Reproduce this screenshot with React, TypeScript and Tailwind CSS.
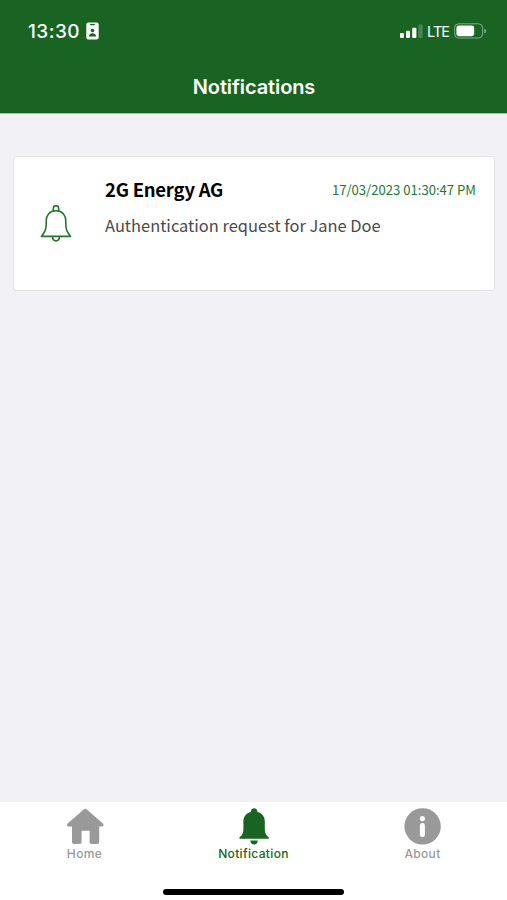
import React from "react";

interface Notification {
  sender: string;
  message: string;
  receivedAt: string;
}

const notifications: Notification[] = [
  {
    sender: "2G Energy AG",
    message: "Authentication request for Jane Doe",
    receivedAt: "17/03/2023 01:30:47 PM",
  },
];

const HomeIcon = () => (
  <svg className="h-[38px] w-[38px]" viewBox="0 0 38 38" fill="currentColor">
    <path d="M20.6 1.3 37.2 15.8Q38.2 18.2 36.4 18.4H33.2V33.9Q33.2 35.9 31.2 35.9H25.4Q23.6 35.9 23.6 34V22.8H15.6V34Q15.6 35.9 13.8 35.9H8Q6 35.9 6 33.9V18.4H2.2Q.4 18.2 1.4 15.8L18 1.3Q19.3.2 20.6 1.3Z" />
  </svg>
);

const BellIcon = () => (
  <svg className="h-[38px] w-[38px]" viewBox="0 0 38 38" fill="currentColor">
    <path d="M16 3C16.2-.6 22-.6 22.2 3L22.4 4C27.2 5.2 29.8 9 29.8 13.5V21.2C29.8 25.2 31 27.3 34 29.6Q34 30.8 33 30.8H5.2Q4.2 30.8 4.2 29.6C7.2 27.3 8.4 25.2 8.4 21.2V13.5C8.4 9 11 5.2 15.8 4Z" />
    <path d="M15.3 32.5H22.9Q22.4 36.6 19.1 36.6T15.3 32.5Z" />
  </svg>
);

const InfoIcon = () => (
  <svg className="h-[38px] w-[38px]" viewBox="0 0 38 38">
    <circle cx="18.6" cy="18.4" r="18.2" fill="currentColor" />
    <circle cx="18.4" cy="10.6" r="2.6" fill="white" />
    <rect x="15.9" y="15" width="5" height="14" rx="2.3" fill="white" />
  </svg>
);

const tabs = [
  { label: "Home", icon: HomeIcon, active: false },
  { label: "Notification", icon: BellIcon, active: true },
  { label: "About", icon: InfoIcon, active: false },
];

const StatusBar = () => (
  <div className="flex h-[62px] items-center justify-between pl-7 pr-5 text-white">
    <div className="flex items-center">
      <span className="w-[58px] pt-px text-[19px] font-medium leading-6 tracking-[0.45px]">13:30</span>
      <svg className="h-[18px] w-[13px]" viewBox="0 0 13 18">
        <rect x=".3" y=".6" width="12.4" height="16.8" rx="2" fill="white" />
        <rect x="4" y="2" width="5" height="1.2" rx=".6" fill="#196422" />
        <circle cx="6.5" cy="8.5" r="1.8" fill="#196422" />
        <path d="M2.9 14.5C2.9 10 10.1 10 10.1 14.5Z" fill="#196422" />
      </svg>
    </div>
    <div className="flex items-center">
      <svg className="h-[15px] w-[23px]" viewBox="0 0 23 15" fill="white">
        <rect x="0" y="9" width="4" height="5" rx="1" />
        <rect x="6" y="6.7" width="4" height="7.3" rx="1" />
        <rect x="12.2" y="3.7" width="4.2" height="10.3" rx="1" />
        <rect x="18.4" y=".6" width="4.2" height="13.4" rx="1" opacity=".22" />
      </svg>
      <span className="ml-1 w-[27px] pt-px text-[14.5px] leading-6 tracking-[-0.9px]">LTE</span>
      <svg className="h-4 w-[33px]" viewBox="0 0 33 16">
        <rect x=".6" y=".8" width="28" height="14.2" rx="4" fill="none" stroke="white" strokeOpacity=".45" />
        <rect x="2.4" y="2.6" width="17.8" height="10.6" rx="2.4" fill="white" />
        <path d="M30.3 5.5Q32.2 6.5 32.2 8T30.3 10.5Z" fill="white" opacity=".5" />
      </svg>
    </div>
  </div>
);

const NotificationCard = ({ item }: { item: Notification }) => (
  <div className="flex h-[135px] rounded-[3px] border border-[#e3e3e7] bg-white font-['Noto_Sans_CJK_SC','Noto_Sans',sans-serif]">
    <div className="flex w-[91px] shrink-0 items-center pl-[23px]">
      <svg className="h-[38px] w-[38px] text-[#23772f]" viewBox="0 0 38 38" fill="none" stroke="currentColor" strokeWidth="1.6" strokeLinejoin="round">
        <path d="M16.3 6.2V3.6C16.3-.2 21.7-.2 21.7 3.6V6.2" />
        <path d="M19 5.8C12.5 5.8 9.2 10.3 9.2 15.8V19.3C9.2 24.8 7.6 27.2 4.4 31.4H33.6C30.4 27.2 28.8 24.8 28.8 19.3V15.8C28.8 10.3 25.5 5.8 19 5.8Z" />
        <path d="M15.5 31.6C15.5 37.3 22.5 37.3 22.5 31.6" />
      </svg>
    </div>
    <div className="flex-1 pr-[18px] pt-4">
      <div className="flex items-center justify-between">
        <h2 className="whitespace-nowrap text-[18.5px] font-bold leading-[30px] tracking-[-0.25px] text-black">{item.sender}</h2>
        <time className="whitespace-nowrap pt-0.5 text-[13.1px] leading-[30px] text-[#23772f]">{item.receivedAt}</time>
      </div>
      <p className="mt-[5px] whitespace-nowrap text-[16.45px] leading-[30px] text-[#4a4a4a]">{item.message}</p>
    </div>
  </div>
);

export default function App() {
  return (
    <div className="flex h-[900px] w-[507px] flex-col overflow-hidden bg-[#f2f1f6] font-['Inter',sans-serif]">
      <header className="h-[114px] shrink-0 border-b border-[#a9bcad] bg-[#196422]">
        <StatusBar />
        <h1 className="pl-px pt-[9px] text-center text-[20px] font-semibold leading-8 tracking-[-0.1px] text-white">Notifications</h1>
      </header>

      <main className="flex-1 pl-[13px] pr-3 pt-[42px]">
        {notifications.map((item) => (
          <NotificationCard key={item.receivedAt} item={item} />
        ))}
      </main>

      {/* Bottom tabs and home indicator */}
      <nav className="flex h-[98px] shrink-0 flex-col items-center bg-white">
        <div className="grid w-full grid-cols-3 pt-1.5">
          {tabs.map(({ label, icon: Icon, active }) => (
            <button
              key={label}
              className={`flex flex-col items-center ${active ? "text-[#196422]" : "text-[#999999]"}`}
            >
              <Icon />
              <span className="text-[12px] font-medium leading-4 tracking-[0.35px]">{label}</span>
            </button>
          ))}
        </div>
        <div className="mt-[27px] h-[6px] w-[181px] rounded-full bg-black" />
      </nav>
    </div>
  );
}
